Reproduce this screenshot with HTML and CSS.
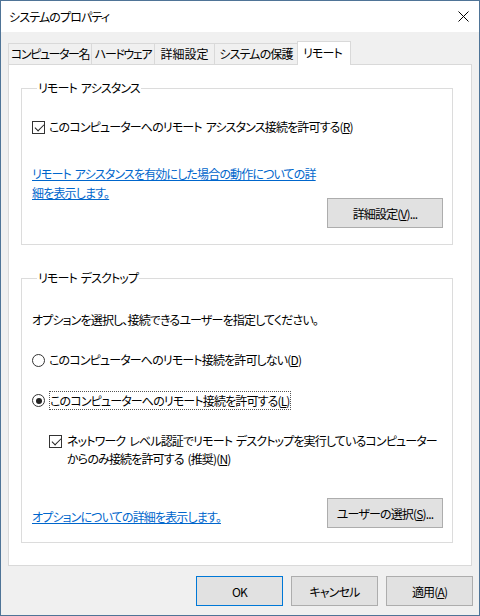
FILE: index.html
```html
<!DOCTYPE html>
<html lang="ja">
<head>
    <meta charset="UTF-8">
    <title>システムのプロパティ</title>
    <link rel="stylesheet" href="styles.css">
</head>
<body>
<div class="window">
    <div class="titlebar">
        <span class="title">システムのプロパティ</span>
        <span class="close">
            <svg width="11" height="11" viewBox="0 0 11 11">
                <path d="M0.5 0.5 L10.5 10.5 M10.5 0.5 L0.5 10.5" stroke="#000" stroke-width="1" fill="none"/>
            </svg>
        </span>
    </div>

    <div class="client">
        <div class="tabs">
            <div class="tab tab-name">コンピューター名</div>
            <div class="tab tab-hw">ハードウェア</div>
            <div class="tab tab-adv">詳細設定</div>
            <div class="tab tab-prot">システムの保護</div>
            <div class="tab tab-remote active">リモート</div>
        </div>

        <div class="panel">
            <fieldset class="group group-assist">
                <legend>リモート アシスタンス</legend>
                <div class="check-row first">
                    <span class="checkbox checked"></span>
                    <span>このコンピューターへのリモート アシスタンス接続を許可する(<u>R</u>)</span>
                </div>
                <a class="link link-assist" href="#">リモート アシスタンスを有効にした場合の動作についての詳<br>細を表示します。</a>
                <div class="button-row">
                    <button class="btn btn-wide">詳細設定(<u>V</u>)...</button>
                </div>
            </fieldset>

            <fieldset class="group group-desktop">
                <legend>リモート デスクトップ</legend>
                <p class="desc">オプションを選択し、接続できるユーザーを指定してください。</p>
                <div class="radio-row">
                    <span class="radio"></span>
                    <span>このコンピューターへのリモート接続を許可しない(<u>D</u>)</span>
                </div>
                <div class="radio-row second">
                    <span class="radio selected"></span>
                    <span class="focused">このコンピューターへのリモート接続を許可する(<u>L</u>)</span>
                </div>
                <div class="check-row nested">
                    <span class="checkbox checked"></span>
                    <span>ネットワーク レベル認証でリモート デスクトップを実行しているコンピューター<br>からのみ接続を許可する (推奨)(<u>N</u>)</span>
                </div>
                <div class="footer-row">
                    <a class="link" href="#">オプションについての詳細を表示します。</a>
                    <button class="btn btn-wide">ユーザーの選択(<u>S</u>)...</button>
                </div>
            </fieldset>
        </div>

        <div class="dialog-buttons">
            <button class="btn default">OK</button>
            <button class="btn">キャンセル</button>
            <button class="btn">適用(<u>A</u>)</button>
        </div>
    </div>
</div>
</body>
</html>
```

FILE: styles.css
```css
* {
    box-sizing: border-box;
}

body {
    margin: 0;
    font-family: "Noto Sans CJK JP", "Noto Sans", sans-serif;
    font-size: 12px;
    font-feature-settings: "palt";
    letter-spacing: -0.85px;
    word-spacing: 2px;
    color: #000;
}

.window {
    width: 480px;
    height: 616px;
    border: 1px solid #4f7497;
    background: #f0f0f0;
}

.titlebar {
    height: 31px;
    background: #fff;
    display: flex;
    align-items: center;
    justify-content: space-between;
    padding: 0 10px 0 8px;
}

.close {
    display: flex;
    width: 11px;
    height: 11px;
}

.client {
    padding: 9px 6px 0 7px;
}

/* tabs */
.tabs {
    display: flex;
    align-items: flex-end;
    height: 23px;
    padding-left: 1px;
}

.tab {
    height: 21px;
    line-height: 20px;
    text-align: center;
    white-space: nowrap;
    border: 1px solid #d9d9d9;
    border-bottom: none;
    margin-left: -1px;
    background: #f0f0f0;
}

.tab-name { width: 84px; letter-spacing: -1.4px; }
.tab-hw { width: 64px; letter-spacing: -1.4px; }
.tab-adv { width: 61px; letter-spacing: 0; }
.tab-prot { width: 84px; }
.tab-remote { width: 54px; }

.tab.active {
    position: relative;
    z-index: 1;
    height: 24px;
    margin-bottom: -1px;
    background: #fff;
    line-height: 22px;
    text-align: left;
    padding-left: 5px;
}

.panel {
    width: 464px;
    height: 502px;
    border: 1px solid #d9d9d9;
    background: #fff;
}

/* group boxes */
.group {
    margin: 15px 18px 0 12px;
    padding: 0 0 0 10px;
    border: 1px solid #dcdcdc;
    min-width: 0;
}

.group legend {
    margin-left: 5px;
    padding: 0 1px;
    line-height: 16px;
}

.group-assist {
    padding-bottom: 16px;
}

.group-desktop {
    margin-top: 25px;
    padding-bottom: 14px;
}

.check-row,
.radio-row {
    display: flex;
    align-items: flex-start;
    line-height: 18px;
}

.check-row.first {
    margin-top: 22px;
}

.check-row.nested {
    margin-top: 22px;
    padding-left: 17px;
}

.checkbox {
    flex: none;
    width: 13px;
    height: 13px;
    margin: 3px 4px 0 0;
    border: 1px solid #333;
    background: #fff;
    position: relative;
}

.checkbox.checked::after {
    content: "";
    position: absolute;
    left: 1px;
    top: 1px;
    width: 8px;
    height: 4px;
    border-left: 1px solid #222;
    border-bottom: 1px solid #222;
    transform: translate(1px, 1px) rotate(-45deg);
}

.check-row.nested .checkbox {
    margin-right: 5px;
}

.radio {
    flex: none;
    width: 13px;
    height: 13px;
    margin: 3px 4px 0 0;
    border: 1px solid #333;
    border-radius: 50%;
    background: #fff;
    display: flex;
    align-items: center;
    justify-content: center;
}

.radio.selected::after {
    content: "";
    width: 6px;
    height: 6px;
    border-radius: 50%;
    background: #222;
}

.radio-row {
    margin-top: 22px;
}

.radio-row.second {
    line-height: 17px;
}

.radio-row.second .radio {
    margin-top: 3px;
}

.focused {
    border: 1px dotted #555;
}

.desc {
    margin: 25px 0 0;
    line-height: 18px;
}

.link {
    color: #0066cc;
    text-decoration: underline;
}

.link-assist {
    display: block;
    margin-top: 28px;
    line-height: 19px;
}

.button-row {
    display: flex;
    justify-content: flex-end;
    padding-right: 9px;
    margin-top: -4px;
}

.footer-row {
    display: flex;
    justify-content: space-between;
    align-items: flex-end;
    padding-right: 9px;
    margin-top: 30px;
    line-height: 18px;
}

.footer-row .link {
    padding-bottom: 2px;
}

/* buttons */
.btn {
    font-family: inherit;
    font-size: 12px;
    font-feature-settings: "palt";
    letter-spacing: inherit;
    color: #000;
    width: 87px;
    height: 30px;
    padding: 0;
    border: 1px solid #adadad;
    background: #e1e1e1;
}

.btn-wide {
    width: 116px;
}

.btn.default {
    border-color: #0078d7;
}

.dialog-buttons {
    display: flex;
    justify-content: flex-end;
    gap: 8px;
    margin-top: 10px;
}
```
